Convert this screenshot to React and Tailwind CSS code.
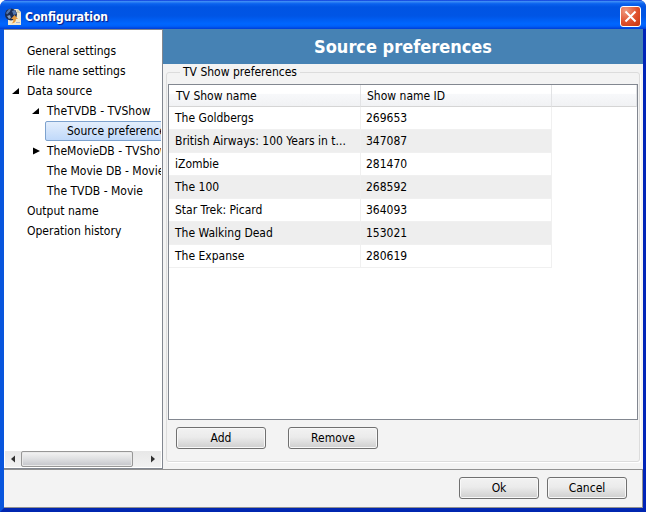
import React from "react";

const shows = [
  ["The Goldbergs", "269653"],
  ["British Airways: 100 Years in t...", "347087"],
  ["iZombie", "281470"],
  ["The 100", "268592"],
  ["Star Trek: Picard", "364093"],
  ["The Walking Dead", "153021"],
  ["The Expanse", "280619"],
];

const tree = [
  { label: "General settings", level: 0 },
  { label: "File name settings", level: 0 },
  { label: "Data source", level: 0, open: true },
  { label: "TheTVDB - TVShow", level: 1, open: true },
  { label: "Source preferences", level: 2, selected: true },
  { label: "TheMovieDB - TVShow", level: 1, open: false },
  { label: "The Movie DB - Movie", level: 1 },
  { label: "The TVDB - Movie", level: 1 },
  { label: "Output name", level: 0 },
  { label: "Operation history", level: 0 },
];

const indents = ["pl-2", "pl-7", "pl-12"];

function AppIcon() {
  return (
    <svg width="16" height="18" viewBox="0 0 16 18" aria-hidden="true">
      <path d="M4 1h9l3 3v13H3V1z" fill="#f3ead0" />
      <path d="M12 1v4h4z" fill="#d8cfae" />
      <circle cx="6" cy="6.5" r="6" fill="#1b2c52" />
      <path d="M1 5q2-4 5-4.500l-1 3-3 3zM7 3l3-1 1.500 4-3 1z" fill="#5577ad" />
      <path d="M2 8l3-1 1 3-2 1z" fill="#8298ba" />
      <path d="M9.500 7l3.500 4h-2q0 4-4.500 4.500 2.500-2 1.500-4.500H6z" fill="#e79b3c" />
      <path d="M11 14.500h4" stroke="#a9b6cf" />
    </svg>
  );
}

function Expander({ open }) {
  return (
    <svg width="8" height="8" viewBox="0 0 8 8" className="shrink-0" aria-hidden="true">
      <path d={open ? "M7 1v6H0z" : "M1 0.5L8 4 1 7.5z"} fill="#000" />
    </svg>
  );
}

function TreeItem({ item }) {
  const hasArrow = item.open !== undefined;
  return (
    <li
      role="treeitem"
      aria-expanded={hasArrow ? item.open : undefined}
      aria-selected={!!item.selected}
      className={
        item.selected ? "h-5 pl-[41px]" : `h-5 ${indents[item.level]}`
      }
    >
      {item.selected ? (
        <button className="flex h-5 w-[140px] items-center rounded-[2px] border border-[#7da2ce] bg-linear-to-b from-[#e3eefc] to-[#c0d9fa] pl-[21px] whitespace-nowrap">
          {item.label}
        </button>
      ) : (
        <button className="flex h-5 items-center gap-[7px] whitespace-nowrap">
          {hasArrow ? <Expander open={item.open} /> : <span className="w-2 shrink-0" />}
          {item.label}
        </button>
      )}
    </li>
  );
}

function PushButton({ children, width }) {
  return (
    <button
      className={`${width} h-[22px] rounded-[3px] border border-[#707070] bg-linear-to-b from-[#f2f2f2] from-0% via-[#ebebeb] via-45% to-[#cfcfcf] to-100% text-center leading-5 shadow-[inset_0_0_0_1px_#f8f8f8]`}
    >
      {children}
    </button>
  );
}

function ScrollBar() {
  return (
    <div className="mx-px flex h-4 shrink-0 items-center bg-linear-to-b from-[#e8e8e8] to-[#f1f1f1]">
      <button aria-label="Scroll left" className="flex h-4 w-4 items-center justify-center">
        <svg width="4" height="8" viewBox="0 0 4 8"><path d="M4 0.5v7L0 4z" fill="#303030" /></svg>
      </button>
      <div className="flex flex-1">
        <div className="h-4 w-28 rounded-[2px] border border-[#979797] bg-linear-to-b from-[#f4f4f4] from-0% via-[#dedfe1] via-50% to-[#c4c5ca] to-100% shadow-[inset_0_0_0_1px_#e9e9e9]" />
      </div>
      <button aria-label="Scroll right" className="flex h-4 w-4 items-center justify-center">
        <svg width="4" height="8" viewBox="0 0 4 8"><path d="M0 0.5v7L4 4z" fill="#303030" /></svg>
      </button>
    </div>
  );
}

const headCell =
  "h-[22px] border-r border-b border-r-[#e2e3e5] border-b-[#d5d5d5] bg-linear-to-b from-white from-40% via-[#f7f8fa] via-45% to-[#f1f2f4] p-0 text-left font-normal";

export default function App() {
  return (
    <div className="flex min-h-screen flex-col rounded-t-[7px] bg-linear-to-r from-[#0831d9] via-[#0855dd] to-[#001ea0] font-['DejaVu_Sans_Condensed','DejaVu_Sans',sans-serif] text-[12px] leading-4 text-black [font-stretch:condensed]">
      <header className="flex h-[29px] shrink-0 items-center rounded-t-[7px] bg-[linear-gradient(to_bottom,#0831d9_0%,#3c8cf5_5%,#0a62ee_13%,#0054e3_24%,#0055e5_55%,#0066ff_82%,#0060f8_90%,#003dd7_100%)] pt-1 pr-[5px] pl-[5px]">
        <AppIcon />
        <h1 className="ml-1 flex-1 text-[12px] font-bold text-white [text-shadow:1px_1px_1px_#0a1883]">Configuration</h1>
        <button aria-label="Close" className="flex h-[21px] w-[21px] items-center justify-center rounded-[3px] border border-white bg-[radial-gradient(circle_at_25%_20%,#ef997f,#e0502c_55%,#c6340c)]">
          <svg width="13" height="13" viewBox="0 0 13 13" aria-hidden="true">
            <path d="M1.500 1.500l10 10M11.500 1.500l-10 10" stroke="#fff" strokeWidth="2" />
          </svg>
        </button>
      </header>

      <div className="flex flex-1 flex-col border-x-4 border-t-0 border-r-[3px] border-b-4 border-l-[#0855dd] border-r-[#0024b8] border-b-[#0026b0]">
        <main className="flex flex-1 bg-[#f3f3f3]">
          <nav className="flex w-[159px] shrink-0 flex-col overflow-hidden border-t border-r border-b border-[#828790] bg-white pb-px">
            <ul role="tree" className="mr-px flex-1 overflow-hidden pt-[11px]">
              {tree.map((item) => <TreeItem key={item.label} item={item} />)}
            </ul>
            <ScrollBar />
          </nav>

          <section className="flex min-w-0 flex-1 flex-col">
            <h2 className="flex h-[35px] shrink-0 items-center justify-center bg-[#4682b4] text-[18px] font-bold text-white">
              Source preferences
            </h2>
            <fieldset className="mr-[3px] mb-[7px] ml-[3px] flex min-w-0 flex-1 flex-col rounded-[3px] border border-[#dcdcdc] px-px shadow-[1px_1px_0_#fff]">
              <legend className="ml-3 h-4 px-[3px]">TV Show preferences</legend>
              <div className="mt-1 flex-1 border border-[#828790] bg-white">
                <table className="w-full table-fixed border-separate border-spacing-0">
                  <colgroup>
                    <col className="w-[192px]" />
                    <col className="w-[191px]" />
                    <col />
                  </colgroup>
                  <thead>
                    <tr>
                      <th scope="col" className={`${headCell} pl-[7px]`}>TV Show name</th>
                      <th scope="col" className={`${headCell} pl-1.5`}>Show name ID</th>
                      <td className={headCell} />
                    </tr>
                  </thead>
                  <tbody>
                    {shows.map(([name, id]) => (
                      <tr key={id} className="group">
                        <td className="h-[23px] truncate border-r border-b border-[#f0f0f0] p-0 pl-1.5 group-even:bg-[#eeeeee]">{name}</td>
                        <td className="h-[23px] border-r border-b border-[#f0f0f0] p-0 pl-[5px] group-even:bg-[#eeeeee]">{id}</td>
                        <td />
                      </tr>
                    ))}
                  </tbody>
                </table>
              </div>
              <div className="flex gap-[22px] pt-[7px] pb-3 pl-2">
                <PushButton width="w-[90px]">Add</PushButton>
                <PushButton width="w-[90px]">Remove</PushButton>
              </div>
            </fieldset>
          </section>
        </main>

        <footer className="flex h-[39px] shrink-0 items-start justify-end gap-2 border-t border-r border-b border-[#919191] bg-[#f3f3f3] pt-[7px] pr-[15px]">
          <PushButton width="w-20">Ok</PushButton>
          <PushButton width="w-20">Cancel</PushButton>
        </footer>
      </div>
    </div>
  );
}
